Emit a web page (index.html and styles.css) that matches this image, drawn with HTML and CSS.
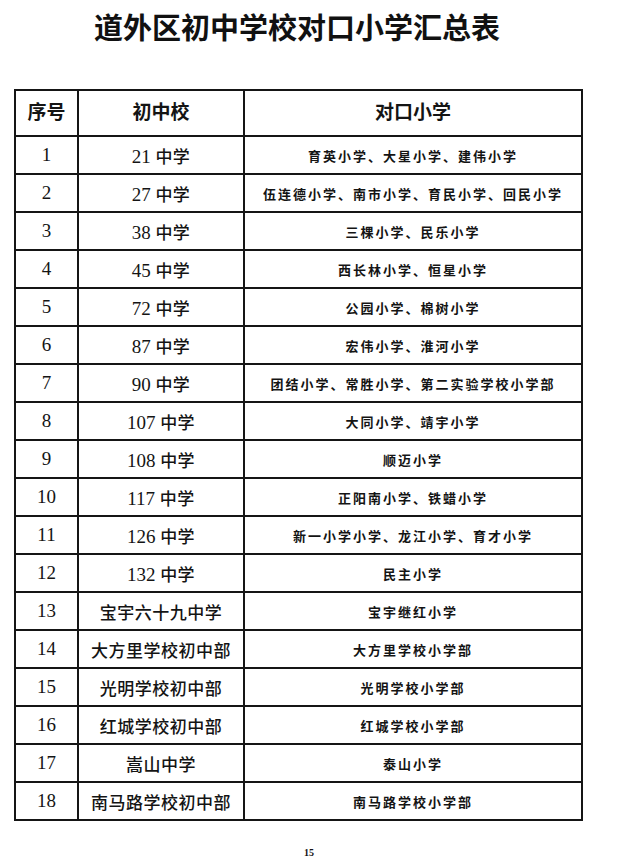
FILE: index.html
```html
<!DOCTYPE html>
<html lang="zh-CN">
<head>
<meta charset="utf-8">
<title>道外区初中学校对口小学汇总表</title>
<link rel="stylesheet" href="styles.css">
</head>
<body>
<div class="page">
  <h1 class="title">道外区初中学校对口小学汇总表</h1>
  <table class="sheet">
    <colgroup>
      <col class="c-no">
      <col class="c-mid">
      <col class="c-pri">
    </colgroup>
    <thead>
      <tr><th>序号</th><th>初中校</th><th>对口小学</th></tr>
    </thead>
    <tbody>
      <tr><td class="no">1</td><td class="mid"><span class="num">21</span> 中学</td><td class="pri">育英小学、大星小学、建伟小学</td></tr>
      <tr><td class="no">2</td><td class="mid"><span class="num">27</span> 中学</td><td class="pri">伍连德小学、南市小学、育民小学、回民小学</td></tr>
      <tr><td class="no">3</td><td class="mid"><span class="num">38</span> 中学</td><td class="pri">三棵小学、民乐小学</td></tr>
      <tr><td class="no">4</td><td class="mid"><span class="num">45</span> 中学</td><td class="pri">西长林小学、恒星小学</td></tr>
      <tr><td class="no">5</td><td class="mid"><span class="num">72</span> 中学</td><td class="pri">公园小学、棉树小学</td></tr>
      <tr><td class="no">6</td><td class="mid"><span class="num">87</span> 中学</td><td class="pri">宏伟小学、淮河小学</td></tr>
      <tr><td class="no">7</td><td class="mid"><span class="num">90</span> 中学</td><td class="pri">团结小学、常胜小学、第二实验学校小学部</td></tr>
      <tr><td class="no">8</td><td class="mid"><span class="num">107</span> 中学</td><td class="pri">大同小学、靖宇小学</td></tr>
      <tr><td class="no">9</td><td class="mid"><span class="num">108</span> 中学</td><td class="pri">顺迈小学</td></tr>
      <tr><td class="no">10</td><td class="mid"><span class="num">117</span> 中学</td><td class="pri">正阳南小学、铁蜡小学</td></tr>
      <tr><td class="no">11</td><td class="mid"><span class="num">126</span> 中学</td><td class="pri">新一小学小学、龙江小学、育才小学</td></tr>
      <tr><td class="no">12</td><td class="mid"><span class="num">132</span> 中学</td><td class="pri">民主小学</td></tr>
      <tr><td class="no">13</td><td class="mid">宝宇六十九中学</td><td class="pri">宝宇继红小学</td></tr>
      <tr><td class="no">14</td><td class="mid">大方里学校初中部</td><td class="pri">大方里学校小学部</td></tr>
      <tr><td class="no">15</td><td class="mid">光明学校初中部</td><td class="pri">光明学校小学部</td></tr>
      <tr><td class="no">16</td><td class="mid">红城学校初中部</td><td class="pri">红城学校小学部</td></tr>
      <tr><td class="no">17</td><td class="mid">嵩山中学</td><td class="pri">泰山小学</td></tr>
      <tr><td class="no">18</td><td class="mid">南马路学校初中部</td><td class="pri">南马路学校小学部</td></tr>
    </tbody>
  </table>
  <div class="pageno">15</div>
</div>
</body>
</html>
```

FILE: styles.css
```css
html, body {
  margin: 0;
  padding: 0;
  background: #ffffff;
}

body {
  color: #141414;
  font-family: "Noto Sans CJK SC", "Noto Sans", sans-serif;
}

.page {
  width: 632px;
  height: 864px;
  padding-top: 11px;
  box-sizing: border-box;
}

.title {
  margin: 0 0 0 82px;
  width: 430px;
  text-align: center;
  font-size: 29px;
  line-height: 30px;
  font-weight: 700;
  letter-spacing: 0;
  color: #111111;
}

.sheet {
  margin: 48px 0 0 14px;
  width: 569px;
  border-collapse: collapse;
  table-layout: fixed;
  border: 2px solid #111111;
}

.c-no { width: 63px; }
.c-mid { width: 166px; }
.c-pri { width: auto; }

.sheet th,
.sheet td {
  border: 2px solid #151515;
  padding: 0;
  text-align: center;
  vertical-align: middle;
}

.sheet th {
  height: 40px;
  font-size: 19px;
  font-weight: 700;
  line-height: 20px;
  padding-bottom: 4px;
}

.sheet td {
  height: 36px;
}

.no {
  font-family: "Liberation Serif", "Times New Roman", serif;
  font-size: 19px;
  padding-top: 6px;
}

.mid {
  font-family: "Liberation Serif", "Noto Sans CJK SC", serif;
  font-size: 17px;
  font-weight: 500;
  letter-spacing: 0.5px;
  padding-top: 4px;
}

.mid .num {
  font-family: "Liberation Serif", serif;
  font-size: 19px;
  letter-spacing: 0;
}

.pri {
  font-size: 13px;
  font-weight: 700;
  letter-spacing: 2px;
  padding-bottom: 6px;
}

.pageno {
  margin: 26px 0 0 304px;
  font-family: "Liberation Serif", serif;
  font-size: 10px;
  font-weight: 700;
}
```
